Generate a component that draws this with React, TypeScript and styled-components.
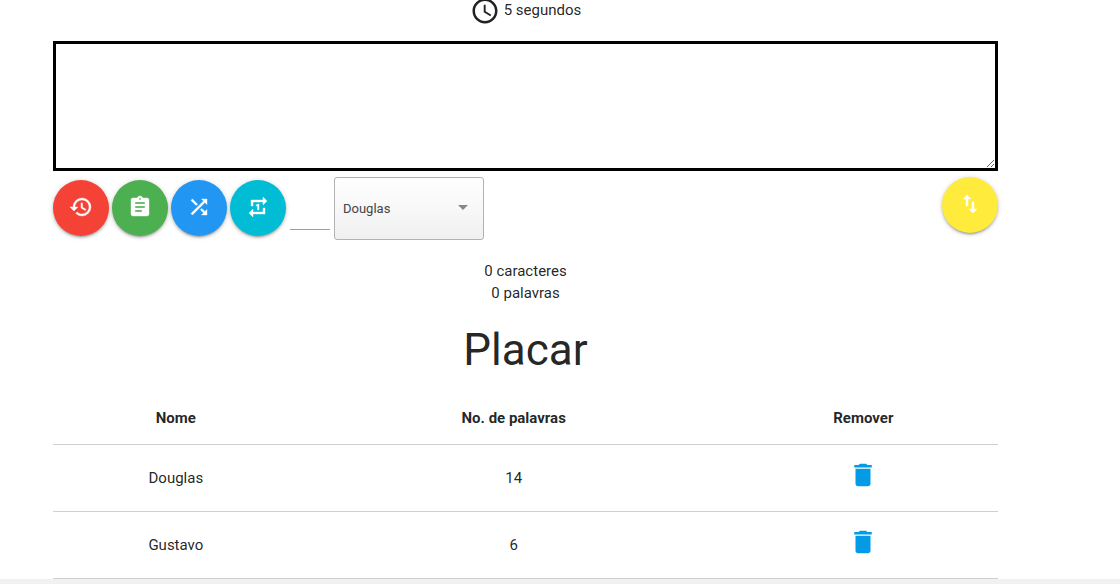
import React, { useState } from "react";
import styled, { createGlobalStyle } from "styled-components";
import {
  MdAccessTime,
  MdAssignment,
  MdDelete,
  MdHistory,
  MdImportExport,
  MdRepeatOne,
  MdShuffle,
} from "react-icons/md";

const GlobalStyle = createGlobalStyle`
  *, *::before, *::after { box-sizing: border-box; }
  body {
    margin: 0;
    overflow: hidden;
    background: #fff;
    color: rgba(0, 0, 0, 0.87);
    font: 15px/22px Roboto, sans-serif;
  }
`;

const Page = styled.main`
  margin-top: -4px;
  padding: 0 122px 0 53px;
`;

const Timer = styled.div`
  display: flex;
  justify-content: center;
  align-items: center;
  gap: 4px;
  height: 30px;
  margin-bottom: 15px;
`;

const TimerText = styled.span`
  padding-bottom: 2px;
`;

const TextArea = styled.textarea`
  display: block;
  width: 100%;
  height: 130px;
  border: 3px solid #000;
  background: #fff;
  font: inherit;
  resize: vertical;
  outline: none;
`;

const Toolbar = styled.div`
  display: flex;
  justify-content: space-between;
  align-items: flex-start;
  padding-top: 6px;
`;

const Tools = styled.div`
  display: flex;
  align-items: center;
  gap: 4px;
`;

const ButtonGroup = styled.div`
  display: flex;
  gap: 3px;
  padding-bottom: 2px;
`;

const RoundButton = styled.button<{ $color: string }>`
  display: flex;
  justify-content: center;
  align-items: center;
  width: 56px;
  height: 56px;
  padding: 0 0 2px;
  border: 0;
  border-radius: 50%;
  background: ${(p) => p.$color};
  color: #fff;
  cursor: pointer;
  box-shadow:
    0 2px 2px rgba(0, 0, 0, 0.14),
    0 3px 1px -2px rgba(0, 0, 0, 0.12),
    0 1px 5px rgba(0, 0, 0, 0.2);

  path:not([fill="none"]) {
    stroke: currentColor;
    stroke-width: 0.4;
  }

  path[fill="none"] {
    stroke: none;
  }
`;

const NumberInput = styled.input`
  width: 40px;
  height: 43px;
  padding: 0;
  border: 0;
  border-bottom: 1px solid #9e9e9e;
  background: transparent;
  font: inherit;
  outline: none;
`;

const SelectBox = styled.div`
  position: relative;
  width: 150px;
`;

const Select = styled.select`
  display: block;
  width: 100%;
  height: 63px;
  padding: 0 30px 0 8px;
  border: 1px solid #b2b2b2;
  border-radius: 3px;
  background: linear-gradient(#fff, #f0f0f0);
  color: #444;
  font: 13px/20px Roboto, sans-serif;
  appearance: none;
`;

const Caret = styled.svg`
  position: absolute;
  top: 28px;
  right: 16px;
  pointer-events: none;
`;

const Counters = styled.div`
  padding-top: 20px;
  text-align: center;
`;

const Title = styled.h1`
  margin: 22px 0 18px;
  font-size: 44px;
  line-height: 48px;
  font-weight: 400;
  text-align: center;
`;

const Table = styled.table`
  width: 100%;
  border-collapse: collapse;
  table-layout: fixed;
  text-align: center;
`;

const Row = styled.tr`
  border-bottom: 1px solid #d0d0d0;
`;

const HeadCell = styled.th<{ $width: string }>`
  width: ${(p) => p.$width};
  height: 52px;
  padding: 0;
  font-weight: 700;
`;

const Cell = styled.td`
  height: 67px;
  padding: 0;
`;

const DeleteLink = styled.a`
  display: flex;
  justify-content: center;
  padding-bottom: 6px;
  color: #039be5;
`;

const BottomBar = styled.div`
  height: 17px;
  background: #f1f1f1;
`;

const players = [
  { name: "Douglas", words: 14 },
  { name: "Gustavo", words: 6 },
];

const tools = [
  { label: "Reiniciar", color: "#f44336", Icon: MdHistory },
  { label: "Colar", color: "#4caf50", Icon: MdAssignment },
  { label: "Embaralhar", color: "#2196f3", Icon: MdShuffle },
  { label: "Repetir", color: "#00bcd4", Icon: MdRepeatOne },
];

export default function App() {
  const [text, setText] = useState("");
  const words = text.trim() ? text.trim().split(/\s+/).length : 0;

  return (
    <>
      <GlobalStyle />
      <Page>
        <Timer>
          <MdAccessTime size={30} />
          <TimerText>5 segundos</TimerText>
        </Timer>
        <TextArea aria-label="Texto" value={text} onChange={(e) => setText(e.target.value)} />
        <Toolbar>
          <Tools>
            <ButtonGroup>
              {tools.map(({ label, color, Icon }) => (
                <RoundButton key={label} type="button" aria-label={label} $color={color}>
                  <Icon size={24} strokeWidth={0} />
                </RoundButton>
              ))}
            </ButtonGroup>
            <NumberInput aria-label="Quantidade" />
            <SelectBox>
              <Select aria-label="Jogador" defaultValue="Douglas">
                {players.map((p) => (
                  <option key={p.name}>{p.name}</option>
                ))}
              </Select>
              <Caret width="10" height="5" viewBox="0 0 10 5" aria-hidden="true">
                <path d="M0 0h10L5 5z" fill="#888" />
              </Caret>
            </SelectBox>
          </Tools>
          <RoundButton type="button" aria-label="Ordenar" $color="#ffeb3b">
            <MdImportExport size={24} />
          </RoundButton>
        </Toolbar>
        <Counters>
          <div>{text.length} caracteres</div>
          <div>{words} palavras</div>
        </Counters>
        <Title>Placar</Title>
        <Table>
          <thead>
            <Row>
              <HeadCell $width="26%">Nome</HeadCell>
              <HeadCell $width="45.5%">No. de palavras</HeadCell>
              <HeadCell $width="28.5%">Remover</HeadCell>
            </Row>
          </thead>
          <tbody>
            {players.map((p) => (
              <Row key={p.name}>
                <Cell>{p.name}</Cell>
                <Cell>{p.words}</Cell>
                <Cell>
                  <DeleteLink href="#" aria-label={`Remover ${p.name}`}>
                    <MdDelete size={30} />
                  </DeleteLink>
                </Cell>
              </Row>
            ))}
          </tbody>
        </Table>
      </Page>
      <BottomBar />
    </>
  );
}
